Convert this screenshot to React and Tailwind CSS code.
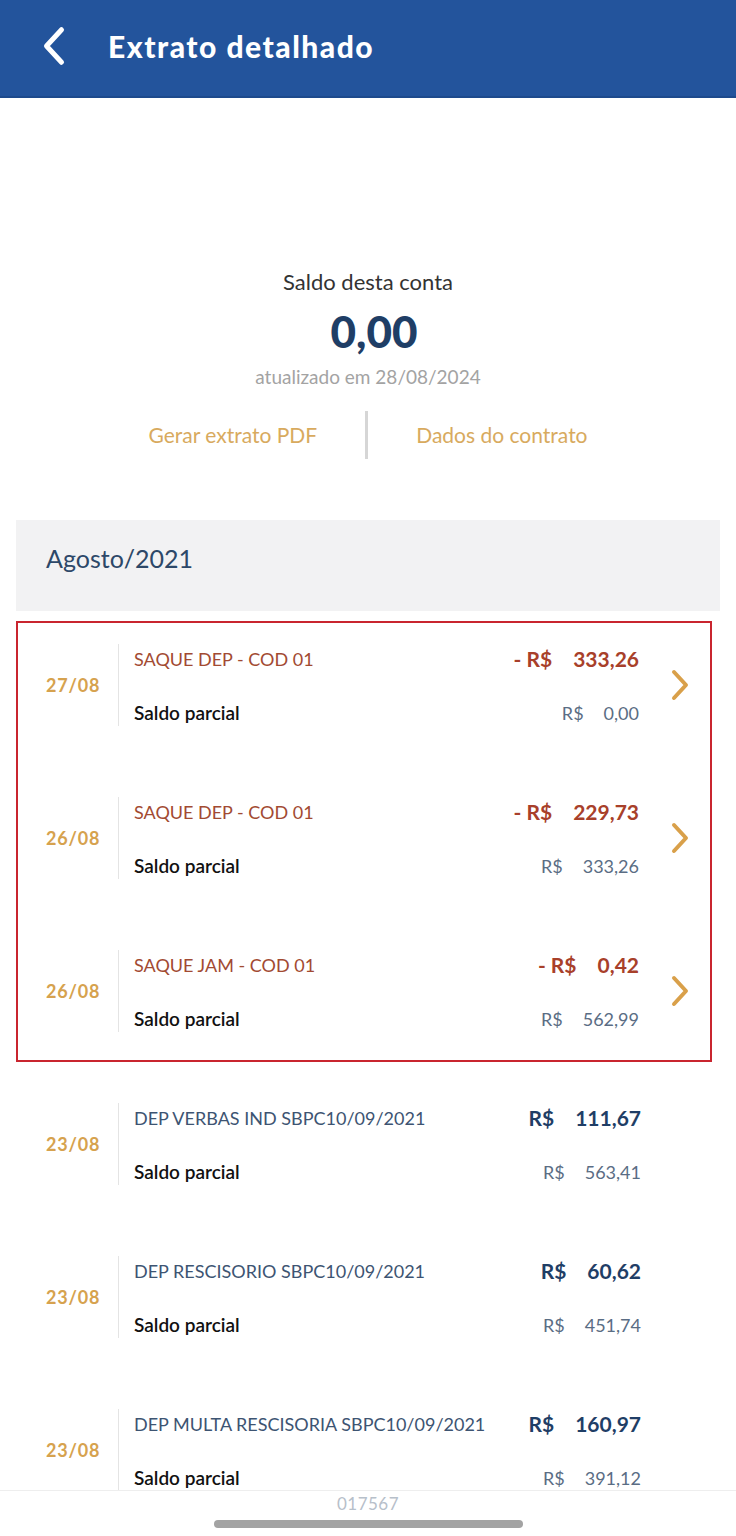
const boxed = [
  { date: '27/08', desc: 'SAQUE DEP - COD 01', amount: '333,26', saldo: '0,00', debit: true },
  { date: '26/08', desc: 'SAQUE DEP - COD 01', amount: '229,73', saldo: '333,26', debit: true },
  { date: '26/08', desc: 'SAQUE JAM - COD 01', amount: '0,42', saldo: '562,99', debit: true },
];

const rest = [
  { date: '23/08', desc: 'DEP VERBAS IND SBPC10/09/2021', amount: '111,67', saldo: '563,41' },
  { date: '23/08', desc: 'DEP RESCISORIO SBPC10/09/2021', amount: '60,62', saldo: '451,74' },
  { date: '23/08', desc: 'DEP MULTA RESCISORIA SBPC10/09/2021', amount: '160,97', saldo: '391,12' },
];

const Chevron = ({ className, dir = 'right' }) => (
  <svg viewBox="0 0 20 32" className={className} fill="none" stroke="currentColor" strokeWidth="4" strokeLinecap="round" strokeLinejoin="round">
    {dir === 'right' ? <path d="M4 3 L16 16 L4 29" /> : <path d="M16 3 L4 16 L16 29" />}
  </svg>
);

const Row = ({ item, arrow }) => (
  <div className="flex items-center">
    <div className="w-[72px] text-[18px] font-bold text-[#d6a24e] tracking-[0.8px]">{item.date}</div>
    <div className="flex-1 border-l border-[#e4e4e4] pl-[15px] h-[82px] flex flex-col justify-between max-w-[523px]">
      <div className="flex items-center justify-between h-[30px]">
        <span className={`text-[18px] ${item.debit ? 'text-[#a24a32]' : 'text-[#3d5472]'}`}>{item.desc}</span>
        <span className={`flex gap-[21px] text-[21px] font-bold ${item.debit ? 'text-[#a8402a]' : 'text-[#1f3e66]'}`}>
          <span>{item.debit ? '- R$' : 'R$'}</span>
          <span>{item.amount}</span>
        </span>
      </div>
      <div className="flex items-center justify-between h-[26px]">
        <span className="text-[19px] font-semibold text-[#111]">Saldo parcial</span>
        <span className="flex gap-[20px] text-[18px] text-[#5a6d84]">
          <span>R$</span>
          <span>{item.saldo}</span>
        </span>
      </div>
    </div>
    {arrow && (
      <div className="w-[71px] flex justify-end pr-[20px]">
        <Chevron className="w-[20px] h-[32px] text-[#d9a04a]" />
      </div>
    )}
  </div>
);

export default function App() {
  return (
    <div className="h-[1536px] flex flex-col bg-white overflow-hidden" style={{ fontFamily: 'Lato, "Open Sans", sans-serif' }}>
      <header className="h-[98px] shrink-0 bg-[#23549c] border-b-2 border-[#1d4a8c] flex items-center pb-[4px]">
        <div className="pl-[40px] pr-[40px]">
          <Chevron dir="left" className="w-[28px] h-[40px] text-white" />
        </div>
        <h1 className="text-[30px] font-black text-white tracking-[1.5px]">Extrato detalhado</h1>
      </header>

      <div className="flex-1 overflow-hidden px-[16px]">
        <div className="flex flex-col items-center mt-[170px]">
          <div className="text-[22px] leading-[28px] text-[#333]">Saldo desta conta</div>
          <div className="mt-[12px] pl-[12px] text-[44px] leading-[46px] font-black text-[#1f3e66]">0,00</div>
          <div className="mt-[12px] text-[19px] leading-[22px] text-[#a3a3a3]">atualizado em 28/08/2024</div>
          <div className="mt-[23px] flex items-center gap-[48px]">
            <span className="text-[21px] text-[#d8aa5e]">Gerar extrato PDF</span>
            <span className="w-[3px] h-[48px] bg-[#d6d6d6]" />
            <span className="text-[21px] text-[#d8aa5e]">Dados do contrato</span>
          </div>
        </div>

        <div className="mt-[61px] h-[91px] bg-[#f2f2f3] pl-[30px] pt-[22px]">
          <span className="text-[25px] leading-[32px] text-[#2d4868]">Agosto/2021</span>
        </div>

        <div className="mt-[10px] mr-[8px] border-2 border-[#c9252f] pl-[28px] pt-[21px] pb-[28px] flex flex-col gap-[71px]">
          {boxed.map((it, i) => (
            <Row key={i} item={it} arrow />
          ))}
        </div>

        <div className="mt-[41px] pl-[30px] flex flex-col gap-[71px]">
          {rest.map((it, i) => (
            <Row key={i} item={it} />
          ))}
        </div>
      </div>

      <footer className="h-[46px] shrink-0 border-t border-[#eeeeee] bg-white flex flex-col items-center">
        <div className="text-[17px] leading-[20px] mt-[3px] text-[#b7c0ca] tracking-[0.5px]">017567</div>
        <div className="mt-[6px] w-[309px] h-[8px] rounded-full bg-[#a3a3a3]" />
      </footer>
    </div>
  );
}
